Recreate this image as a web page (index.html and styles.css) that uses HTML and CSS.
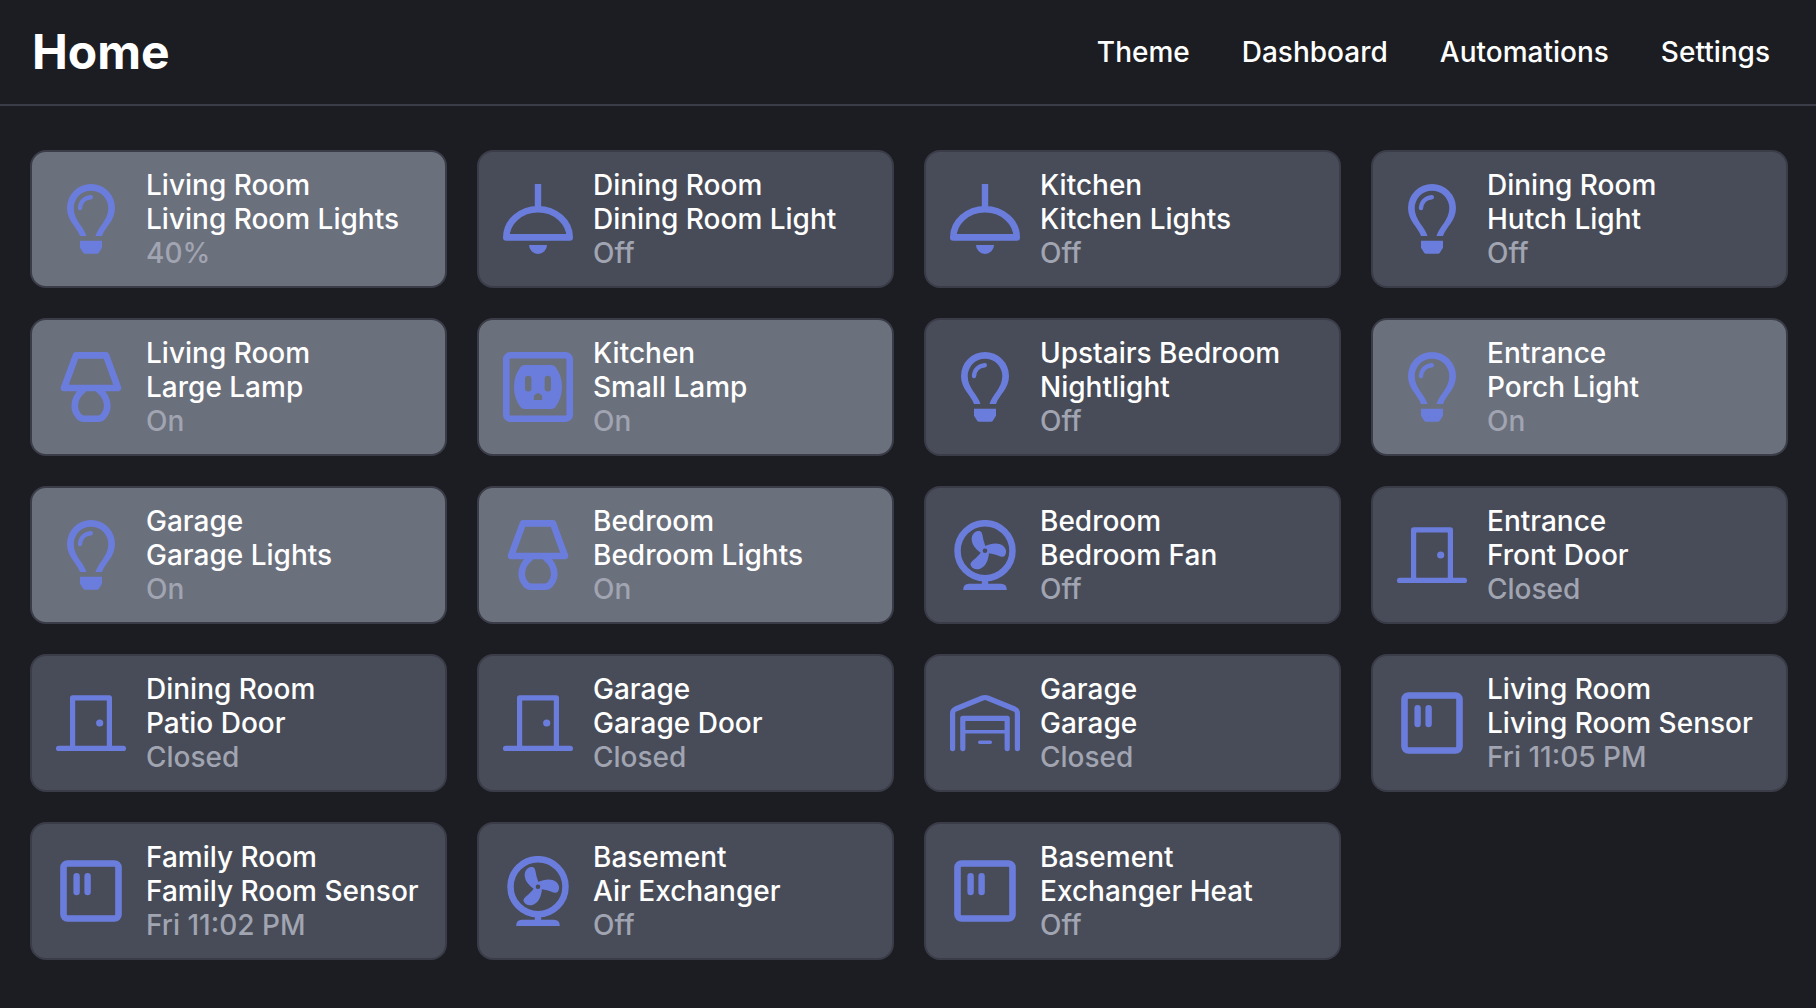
FILE: index.html
```html
<!DOCTYPE html>
<html lang="en">
<head>
<meta charset="utf-8">
<meta name="viewport" content="width=device-width, initial-scale=1">
<title>Home</title>
<link rel="stylesheet" href="styles.css">
</head>
<body>
<svg class="sprite" aria-hidden="true">
  <symbol id="bulb" viewBox="0 0 70 70">
    <path class="fill" d="M24 52C21 43 11 37 11 24A24 24 0 0 1 59 24C59 37 49 43 46 52H39.5C42 43 52.3 36 52.3 24A17.3 17.3 0 0 0 17.7 24C17.7 36 28 43 30.5 52Z"/>
    <path class="line" stroke-width="4.4" d="M24 24C24.5 18.2 28.5 13.6 34.8 13.2"/>
    <path class="fill" d="M24 56.7H46V63.8L43 68.6Q42.2 69.8 40.8 69.8H29.2Q27.8 69.8 27 68.6L24 63.8Z"/>
  </symbol>
  <symbol id="pendant" viewBox="0 0 70 70">
    <path class="fill" d="M31.8 0H38.2V25H31.8ZM26 61H44A9 9 0 0 1 26 61Z"/>
    <path class="line" stroke-width="6.6" d="M3.3 53.4A31.7 28.2 0 0 1 66.7 53.4Z"/>
  </symbol>
  <symbol id="lamp" viewBox="0 0 70 70">
    <path class="line" stroke-width="6.6" d="M20 3.4H50L62 36H8ZM27 38C21 43 18.7 49 18.7 54C18.7 58 20 61 22.5 64Q24.500 66.7 28 66.7H42Q45.5 66.7 47.5 64C50 61 51.3 58 51.3 54C51.3 49 49 43 43 38"/>
  </symbol>
  <symbol id="outlet" viewBox="0 0 70 70">
    <rect class="line" stroke-width="6.6" x="3.3" y="3.3" width="63.4" height="63.4" rx="4"/>
    <path class="fill" fill-rule="evenodd" d="M21.5 13H48.5Q50.8 13 52.5 15C61.2 26 61.2 44 52.5 55Q50.8 57 48.5 57H21.5Q19.2 57 17.5 55C8.8 44 8.8 26 17.5 15Q19.2 13 21.5 13ZM22 27V36.3A3.2 3.2 0 0 0 28.4 36.3V27A3.2 3.2 0 0 0 22 27ZM41.6 27V36.3A3.2 3.2 0 0 0 48 36.3V27A3.2 3.2 0 0 0 41.6 27ZM30.8 48H39.2V45.5A4.2 4.2 0 0 0 30.8 45.5Z"/>
  </symbol>
  <symbol id="fan" viewBox="0 0 70 70">
    <circle class="line" stroke-width="6.5" cx="35" cy="30.7" r="27.5"/>
    <path class="fill" d="M31.8 60H38.2V63.7H51Q56.8 63.7 56.8 70H13.2Q13.2 63.7 19 63.7H31.8Z"/>
    <g class="fill">
      <path id="blade" d="M31 33C24.5 28.5 21 23 21.8 17.5C22.6 13 26 10.5 29.5 11C33 11.5 32.2 17 34.5 23.5L37 31Z"/>
      <use href="#blade" transform="rotate(120 35 30.7)"/>
      <use href="#blade" transform="rotate(240 35 30.7)"/>
    </g>
    <circle class="hub" cx="35" cy="30.7" r="2.3"/>
  </symbol>
  <symbol id="door" viewBox="0 0 70 70">
    <path class="line" stroke-width="5.2" d="M16.6 60V9.8H53.4V60M2.6 60.4H67.4"/>
    <circle class="fill" cx="43.7" cy="35" r="3.6"/>
  </symbol>
  <symbol id="garage" viewBox="0 0 70 70">
    <path class="line" stroke-width="5.2" d="M2.6 60.6V25.5Q2.6 22.3 5.5 21L32.5 10Q35 9 37.5 10L64.5 21Q67.4 22.3 67.4 25.5V60.6M12.8 60.6V30.4H57.2V60.6"/>
    <path class="line" stroke-width="3.5" d="M13 43.7H57M29.7 54.2H40.3"/>
  </symbol>
  <symbol id="sensor" viewBox="0 0 70 70">
    <rect class="line" stroke-width="6.6" x="7.5" y="7.5" width="55" height="55" rx="4"/>
    <path class="line" stroke-width="6.4" d="M20.6 20.3V36M31.6 20.3V36"/>
  </symbol>
</svg>

<header class="topbar">
  <h1 class="title">Home</h1>
  <nav class="nav" aria-label="Main">
    <a href="#theme">Theme</a>
    <a href="#dashboard">Dashboard</a>
    <a href="#automations">Automations</a>
    <a href="#settings">Settings</a>
  </nav>
</header>

<main class="grid">
  <button class="tile on" type="button"><svg class="icon" aria-hidden="true"><use href="#bulb"/></svg><span class="info"><span>Living Room</span><span>Living Room Lights</span><span class="state">40%</span></span></button>
  <button class="tile" type="button"><svg class="icon" aria-hidden="true"><use href="#pendant"/></svg><span class="info"><span>Dining Room</span><span>Dining Room Light</span><span class="state">Off</span></span></button>
  <button class="tile" type="button"><svg class="icon" aria-hidden="true"><use href="#pendant"/></svg><span class="info"><span>Kitchen</span><span>Kitchen Lights</span><span class="state">Off</span></span></button>
  <button class="tile" type="button"><svg class="icon" aria-hidden="true"><use href="#bulb"/></svg><span class="info"><span>Dining Room</span><span>Hutch Light</span><span class="state">Off</span></span></button>

  <button class="tile on" type="button"><svg class="icon" aria-hidden="true"><use href="#lamp"/></svg><span class="info"><span>Living Room</span><span>Large Lamp</span><span class="state">On</span></span></button>
  <button class="tile on" type="button"><svg class="icon" aria-hidden="true"><use href="#outlet"/></svg><span class="info"><span>Kitchen</span><span>Small Lamp</span><span class="state">On</span></span></button>
  <button class="tile" type="button"><svg class="icon" aria-hidden="true"><use href="#bulb"/></svg><span class="info"><span>Upstairs Bedroom</span><span>Nightlight</span><span class="state">Off</span></span></button>
  <button class="tile on" type="button"><svg class="icon" aria-hidden="true"><use href="#bulb"/></svg><span class="info"><span>Entrance</span><span>Porch Light</span><span class="state">On</span></span></button>

  <button class="tile on" type="button"><svg class="icon" aria-hidden="true"><use href="#bulb"/></svg><span class="info"><span>Garage</span><span>Garage Lights</span><span class="state">On</span></span></button>
  <button class="tile on" type="button"><svg class="icon" aria-hidden="true"><use href="#lamp"/></svg><span class="info"><span>Bedroom</span><span>Bedroom Lights</span><span class="state">On</span></span></button>
  <button class="tile" type="button"><svg class="icon" aria-hidden="true"><use href="#fan"/></svg><span class="info"><span>Bedroom</span><span>Bedroom Fan</span><span class="state">Off</span></span></button>
  <button class="tile" type="button"><svg class="icon" aria-hidden="true"><use href="#door"/></svg><span class="info"><span>Entrance</span><span>Front Door</span><span class="state">Closed</span></span></button>

  <button class="tile" type="button"><svg class="icon" aria-hidden="true"><use href="#door"/></svg><span class="info"><span>Dining Room</span><span>Patio Door</span><span class="state">Closed</span></span></button>
  <button class="tile" type="button"><svg class="icon" aria-hidden="true"><use href="#door"/></svg><span class="info"><span>Garage</span><span>Garage Door</span><span class="state">Closed</span></span></button>
  <button class="tile" type="button"><svg class="icon" aria-hidden="true"><use href="#garage"/></svg><span class="info"><span>Garage</span><span>Garage</span><span class="state">Closed</span></span></button>
  <button class="tile" type="button"><svg class="icon" aria-hidden="true"><use href="#sensor"/></svg><span class="info"><span>Living Room</span><span>Living Room Sensor</span><span class="state">Fri 11:05 PM</span></span></button>

  <button class="tile" type="button"><svg class="icon" aria-hidden="true"><use href="#sensor"/></svg><span class="info"><span>Family Room</span><span>Family Room Sensor</span><span class="state">Fri 11:02 PM</span></span></button>
  <button class="tile" type="button"><svg class="icon" aria-hidden="true"><use href="#fan"/></svg><span class="info"><span>Basement</span><span>Air Exchanger</span><span class="state">Off</span></span></button>
  <button class="tile" type="button"><svg class="icon" aria-hidden="true"><use href="#sensor"/></svg><span class="info"><span>Basement</span><span>Exchanger Heat</span><span class="state">Off</span></span></button>
</main>
</body>
</html>
```
FILE: styles.css
```css
:root {
  --bg: #1c1d22;
  --line: #3a3c48;
  --tile: #484c58;
  --tile-on: #6b707d;
  --accent: #6b7ddc;
  --text: #ffffff;
  --muted: #a1a4b1;
}

* {
  box-sizing: border-box;
}

body {
  margin: 0;
  min-height: 100vh;
  background: var(--bg);
  color: var(--text);
  font-family: Inter, "Liberation Sans", sans-serif;
  font-size: 28px;
  font-weight: 500;
  line-height: 34px;
}

.sprite {
  display: none;
}

.topbar {
  display: flex;
  align-items: center;
  justify-content: space-between;
  padding: 22px 46px 22px 32px;
  border-bottom: 2px solid var(--line);
}

.title {
  margin: 0;
  font-size: 48px;
  font-weight: 700;
  line-height: 60px;
}

.nav {
  display: flex;
  gap: 52px;
}

.nav a {
  color: inherit;
  text-decoration: none;
}

.grid {
  display: grid;
  grid-template-columns: repeat(4, minmax(0, 1fr));
  gap: 30px;
  padding: 44px 28px 44px 30px;
}

.tile {
  display: flex;
  align-items: center;
  gap: 20px;
  padding: 16px 24px;
  border: 2px solid var(--line);
  border-radius: 16px;
  background: var(--tile);
  color: inherit;
  font: inherit;
  text-align: left;
  cursor: pointer;
}

.tile.on {
  background: var(--tile-on);
}

.icon {
  flex: none;
  width: 70px;
  height: 70px;
}

.info {
  display: flex;
  flex-direction: column;
  min-width: 0;
  white-space: nowrap;
}

.state {
  color: var(--muted);
}

.fill {
  fill: var(--accent);
}

.line {
  fill: none;
  stroke: var(--accent);
  stroke-linecap: round;
  stroke-linejoin: round;
}

.hub {
  fill: var(--tile);
}
```
